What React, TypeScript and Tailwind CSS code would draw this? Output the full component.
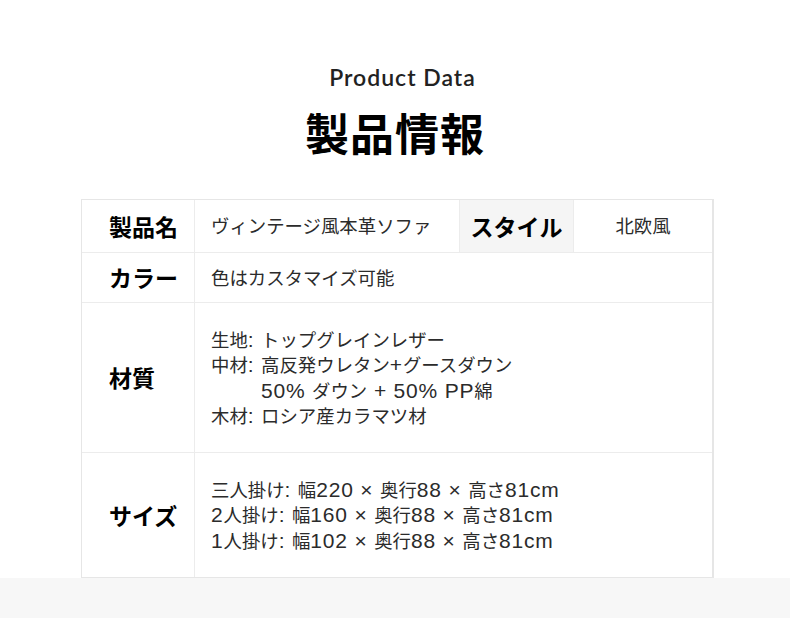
import React from "react";

const cjk = '"Noto Sans CJK JP", sans-serif';

// latin runs are set in a wider face than the Japanese text around them
function T({ s }: { s: string }) {
    const parts = s.split(/([\x20-\x7E×]+)/).filter(Boolean);
    return (
        <>
            {parts.map((p, i) =>
                /^[\x20-\x7E×]+$/.test(p) ? (
                    <span
                        key={i}
                        className="text-[21px] leading-[24.5px] tracking-[0.8px]"
                        style={{ fontFamily: '"Liberation Sans", sans-serif' }}
                    >
                        {p}
                    </span>
                ) : (
                    <span key={i}>{p}</span>
                )
            )}
        </>
    );
}

function Label({ children, className = "" }: { children: React.ReactNode; className?: string }) {
    return (
        <div className={`flex items-center pl-[27px] text-[23px] font-bold text-black ${className}`}>
            {children}
        </div>
    );
}

export default function App() {
    return (
        <div className="w-[790px] h-[618px] bg-white flex flex-col" style={{ fontFamily: cjk }}>
            <div className="flex flex-col items-center pt-[66px]">
                <p
                    className="ml-[15px] text-[23px] font-semibold text-[#222] leading-none tracking-[1px]"
                    style={{ fontFamily: "Lato, sans-serif" }}
                >
                    Product Data
                </p>
                <h1 className="mt-[21px] text-[44px] font-bold text-black leading-none tracking-[1px]">製品情報</h1>
            </div>

            <div className="ml-[81px] mt-[45px] w-[633px] border border-[#e6e6e6] border-r-2 text-[18.4px] text-[#2b2b2b]">
                <div className="flex h-[53px] border-b border-[#ececec]">
                    <Label className="w-[113px] border-r border-[#ececec]">製品名</Label>
                    <div className="w-[264px] flex items-center pl-[16px]">ヴィンテージ風本革ソファ</div>
                    <div className="w-[115px] flex items-center justify-center bg-[#f5f5f5] border-x border-[#ececec] text-[23px] font-bold text-black">
                        スタイル
                    </div>
                    <div className="flex-1 flex items-center justify-center">北欧風</div>
                </div>
                <div className="flex h-[50px] border-b border-[#ececec]">
                    <Label className="w-[113px] border-r border-[#ececec]">カラー</Label>
                    <div className="flex-1 flex items-center pl-[16px]">色はカスタマイズ可能</div>
                </div>
                <div className="flex h-[150px] border-b border-[#ececec]">
                    <Label className="w-[113px] border-r border-[#ececec]">材質</Label>
                    <div className="flex-1 flex flex-col justify-center pl-[16px] leading-[24.5px]">
                        <p><T s="生地: トップグレインレザー" /></p>
                        <p><T s="中材: 高反発ウレタン+グースダウン" /></p>
                        <p className="pl-[50px]"><T s="50% ダウン + 50% PP綿" /></p>
                        <p><T s="木材: ロシア産カラマツ材" /></p>
                    </div>
                </div>
                <div className="flex h-[124px]">
                    <Label className="w-[113px] border-r border-[#ececec]">サイズ</Label>
                    <div className="flex-1 flex flex-col justify-center pl-[16px] leading-[24.5px]">
                        <p><T s="三人掛け: 幅220 × 奥行88 × 高さ81cm" /></p>
                        <p><T s="2人掛け: 幅160 × 奥行88 × 高さ81cm" /></p>
                        <p><T s="1人掛け: 幅102 × 奥行88 × 高さ81cm" /></p>
                    </div>
                </div>
            </div>
            <div className="flex-1 bg-[#f7f7f7]" />
        </div>
    );
}
